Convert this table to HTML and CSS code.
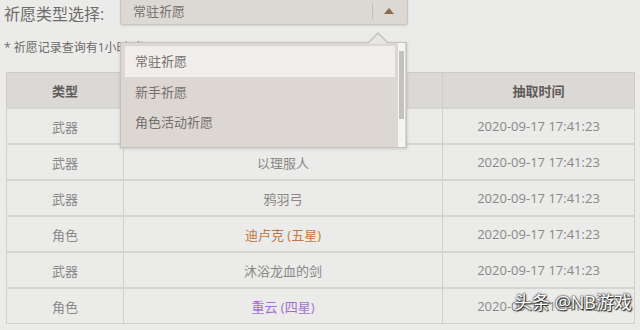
FILE: index.html
```html
<!DOCTYPE html>
<html lang="zh">
<head>
<meta charset="utf-8">
<link rel="stylesheet" href="styles.css">
</head>
<body>
<div class="page">
  <div class="top">
    <span class="label">祈愿类型选择:</span>
    <div class="select">
      <span class="sel-text">常驻祈愿</span>
      <span class="sel-sep"></span>
      <svg class="sel-arrow" width="10" height="6" viewBox="0 0 10 6"><path d="M0 6 L5 0 L10 6 Z" fill="#8a6a4c"/></svg>
      <div class="dropdown">
        <span class="caret-out"></span>
        <span class="caret-in"></span>
        <div class="options">
          <div class="opt active">常驻祈愿</div>
          <div class="opt">新手祈愿</div>
          <div class="opt">角色活动祈愿</div>
        </div>
        <div class="scroll">
          <span class="sb-up"></span>
          <span class="sb-thumb"></span>
          <span class="sb-down"></span>
        </div>
      </div>
    </div>
  </div>
  <div class="note">* 祈愿记录查询有1小时延迟</div>
  <table class="records">
    <thead>
      <tr><th class="c1">类型</th><th class="c2">名称</th><th class="c3">抽取时间</th></tr>
    </thead>
    <tbody>
      <tr><td>武器</td><td>以理服人</td><td>2020-09-17 17:41:23</td></tr>
      <tr><td>武器</td><td>以理服人</td><td>2020-09-17 17:41:23</td></tr>
      <tr><td>武器</td><td>鸦羽弓</td><td>2020-09-17 17:41:23</td></tr>
      <tr><td>角色</td><td class="five">迪卢克 (五星)</td><td>2020-09-17 17:41:23</td></tr>
      <tr><td>武器</td><td>沐浴龙血的剑</td><td>2020-09-17 17:41:23</td></tr>
      <tr><td>角色</td><td class="four">重云 (四星)</td><td>2020-09-17 17:41:23</td></tr>
    </tbody>
  </table>
  <div class="watermark">头条 @NB游戏</div>
</div>
</body>
</html>
```
FILE: styles.css
```css
html, body {
  margin: 0;
  padding: 0;
  background: #ebebea;
  font-family: "Open Sans", "Noto Sans CJK SC", sans-serif;
  overflow: hidden;
}
.page {
  position: relative;
  width: 640px;
  height: 330px;
}
.top {
  display: flex;
  align-items: center;
  height: 25px;
  padding-left: 4px;
}
.label {
  font-size: 16px;
  color: #6e6c6a;
  width: 116px;
}
.select {
  position: relative;
  box-sizing: border-box;
  width: 288px;
  height: 31px;
  margin-top: -6px;
  background: #dcd8d4;
  border: 1px solid #cbc6c2;
  border-top: none;
  border-radius: 0 0 3px 3px;
  display: flex;
  align-items: center;
  box-shadow: 0 1px 2px rgba(0,0,0,0.12);
}
.sel-text {
  font-size: 13px;
  color: #76726e;
  padding-left: 12px;
  flex: 1;
  margin-top: 3px;
}
.sel-sep {
  width: 1px;
  height: 16px;
  background: #c4bfbb;
  margin-top: 4px;
}
.sel-arrow {
  margin: 4px 13px 0 11px;
}
.dropdown {
  position: absolute;
  left: -1px;
  top: 48px;
  width: 287px;
  height: 106px;
  box-sizing: border-box;
  background: #dcd7d3;
  border: 1px solid #c6c1bd;
  box-shadow: 0 1px 3px rgba(0,0,0,0.15);
  display: flex;
  padding: 3px 1px 3px 4px;
  z-index: 5;
}
.caret-out, .caret-in {
  position: absolute;
  width: 0;
  height: 0;
  border-style: solid;
  border-color: transparent;
}
.caret-out {
  top: -11px;
  right: 17px;
  border-width: 0 11px 11px 11px;
  border-bottom-color: #c6c1bd;
}
.caret-in {
  top: -9px;
  right: 18px;
  border-width: 0 10px 10px 10px;
  border-bottom-color: #e8e6e4;
}
.options {
  flex: 1;
  margin-right: 2px;
}
.opt {
  height: 30px;
  line-height: 30px;
  font-size: 13px;
  color: #74706c;
  padding-left: 10px;
}
.opt.active {
  background: #f1edea;
  height: 31px;
  line-height: 31px;
}
.scroll {
  width: 7px;
  background: #f4f4f3;
  display: flex;
  flex-direction: column;
  margin-top: -3px;
  margin-bottom: -3px;
  border-left: 1px solid #d8d8d8;
}
.sb-up, .sb-down {
  height: 6px;
}
.sb-thumb {
  height: 68px;
  background: #c3c2c0;
  margin: 2px 1px;
}
.sb-down {
  margin-top: auto;
}
.note {
  font-size: 12px;
  color: #6c6a68;
  padding: 13px 0 0 4px;
  height: 21px;
}
.records {
  margin: 13px 0 0 6px;
  width: 629px;
  border-collapse: collapse;
  border: 1px solid #cfcfcd;
  font-size: 13px;
}
.records th {
  background: #dcd8d5;
  color: #5f5c5a;
  font-weight: bold;
  height: 34px;
  padding: 0;
  border: 1px solid #cfcbc8;
}
.records td {
  background: #ebebea;
  color: #8a8886;
  text-align: center;
  height: 34px;
  padding: 0;
  border: 1px solid #d0d0ce;
  border-top: 2px solid #d4d4d2;
}
.records .c1 { width: 116px; }
.records .c3 { width: 191px; }
.records td.five { color: #c4773c; }
.records td.four { color: #a46fd0; }
.watermark {
  position: absolute;
  right: 8px;
  bottom: 16px;
  font-size: 18px;
  color: #ffffff;
  text-shadow: 0 0 2px #333, 0 0 2px #333, 1px 1px 1px #222;
}
```
